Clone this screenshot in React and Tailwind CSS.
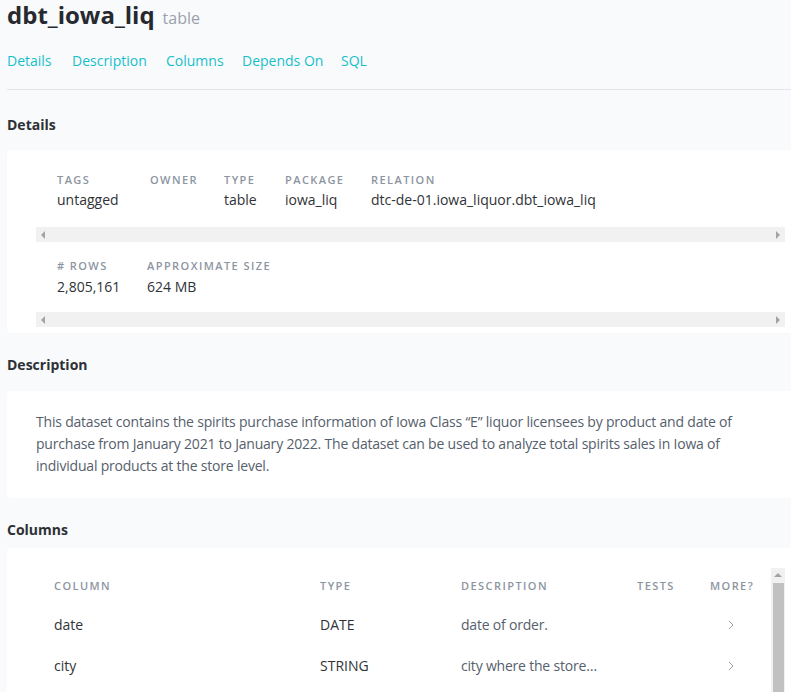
import React from "react";

const font = { fontFamily: '"Open Sans", "Noto Sans", sans-serif' };

function HScroll() {
  return (
    <div className="h-[15px] bg-[#f1f1f1] flex items-center justify-between px-[5px]">
      <svg width="5" height="8" viewBox="0 0 5 8"><path d="M4 0 L0 4 L4 8 Z" fill="#a3a3a3" /></svg>
      <svg width="5" height="8" viewBox="0 0 5 8"><path d="M1 0 L5 4 L1 8 Z" fill="#a3a3a3" /></svg>
    </div>
  );
}

function Field({ label, value, className = "", gap = "mt-[2px]" }) {
  return (
    <div className={"flex flex-col shrink-0 " + className}>
      <div className="text-[11px] leading-[16px] font-semibold tracking-[0.13em] text-[#8d95a1] uppercase whitespace-nowrap">{label}</div>
      <div className={"text-[14px] leading-[20px] text-[#2f3337] whitespace-nowrap min-h-[20px] " + gap}>{value}</div>
    </div>
  );
}

function Chevron() {
  return (
    <svg width="6" height="10" viewBox="0 0 6 10"><path d="M1 1 L5 5 L1 9" fill="none" stroke="#9aa1ab" strokeWidth="1" /></svg>
  );
}

const th = "text-[11px] leading-[16px] font-semibold tracking-[0.13em] text-[#8d95a1]";

export default function App() {
  return (
    <div className="min-h-screen bg-[#f9fafb] overflow-hidden" style={font}>
      <div className="pl-[7px]">
        <div className="flex items-baseline gap-[8px] h-[32px]">
          <span className="text-[24px] leading-[30px] font-bold text-[#262a30]">dbt_iowa_liq</span>
          <span className="text-[16px] text-[#9aa1ab]">table</span>
        </div>
        <div className="flex text-[14px] leading-[20px] text-[#17bfcb] mt-[19px]">
          <span className="w-[65px]">Details</span>
          <span className="w-[94px]">Description</span>
          <span className="w-[76px]">Columns</span>
          <span className="w-[99px]">Depends On</span>
          <span>SQL</span>
        </div>
        <div className="border-t border-[#e3e5e8] mt-[18px]" />

        <h2 className="text-[14px] leading-[20px] font-bold text-[#2d3035] mt-[25px]">Details</h2>
        <div className="bg-white rounded-l-[4px] mt-[15px] pl-[29px] pr-[6px] shadow-[0_0_1px_rgba(0,0,0,0.06)]">
          <div className="pt-[22px]">
            <div className="flex pl-[21px] pb-[17px]">
              <Field label="Tags" value="untagged" className="w-[93px]" />
              <Field label="Owner" value="" className="w-[74px]" />
              <Field label="Type" value="table" className="w-[61px]" />
              <Field label="Package" value="iowa_liq" className="w-[86px]" />
              <Field label="Relation" value="dtc-de-01.iowa_liquor.dbt_iowa_liq" />
            </div>
            <HScroll />
          </div>
          <div className="pt-[16px] pb-[6px]">
            <div className="flex pl-[21px] pb-[15px]">
              <Field label="# Rows" value="2,805,161" className="w-[90px]" gap="mt-[3px]" />
              <Field label="Approximate Size" value="624 MB" gap="mt-[3px]" />
            </div>
            <HScroll />
          </div>
        </div>

        <h2 className="text-[14px] leading-[20px] font-bold text-[#2d3035] mt-[22px]">Description</h2>
        <div className="bg-white rounded-l-[4px] mt-[16px] pl-[29px] pt-[20px] pb-[21px]">
          <p className="text-[14px] leading-[22px] text-[#56606c] whitespace-nowrap tracking-[-0.2px]">
            This dataset contains the spirits purchase information of Iowa Class “E” liquor licensees by product and date of
            <br />
            purchase from January 2021 to January 2022. The dataset can be used to analyze total spirits sales in Iowa of
            <br />
            individual products at the store level.
          </p>
        </div>

        <h2 className="text-[14px] leading-[20px] font-bold text-[#2d3035] mt-[22px]">Columns</h2>
        <div className="bg-white rounded-l-[4px] mt-[8px] pl-[29px] pr-[6px] pt-[20px] h-[200px]">
          <div className="flex h-full">
            <div className="flex-1 pl-[18px]">
              <div className="grid grid-cols-[266px_141px_176px_73px_60px] pt-[10px]">
                <div className={th}>COLUMN</div>
                <div className={th}>TYPE</div>
                <div className={th}>DESCRIPTION</div>
                <div className={th}>TESTS</div>
                <div className={th}>MORE?</div>
              </div>
              {[
                ["date", "DATE", "date of order."],
                ["city", "STRING", "city where the store…"],
              ].map(([c, t, d], i) => (
                <div key={c} className={"grid grid-cols-[266px_141px_176px_73px_42px] items-center h-[41px] " + (i === 0 ? "mt-[10px]" : "")}>
                  <div className="text-[14px] text-[#2f3337]">{c}</div>
                  <div className="text-[14px] text-[#2f3337]">{t}</div>
                  <div className="text-[14px] text-[#56606c] whitespace-nowrap tracking-[-0.2px]">{d}</div>
                  <div />
                  <div className="flex justify-center"><Chevron /></div>
                </div>
              ))}
            </div>
            <div className="w-[14px] bg-[#f1f1f1] flex flex-col items-center">
              <svg width="8" height="14" viewBox="0 0 8 14" className="mt-[1px]"><path d="M0 8 L4 4 L8 8 Z" fill="#a3a3a3" /></svg>
              <div className="w-[11px] flex-1 bg-[#c1c1c1]" />
            </div>
          </div>
        </div>
      </div>
    </div>
  );
}
